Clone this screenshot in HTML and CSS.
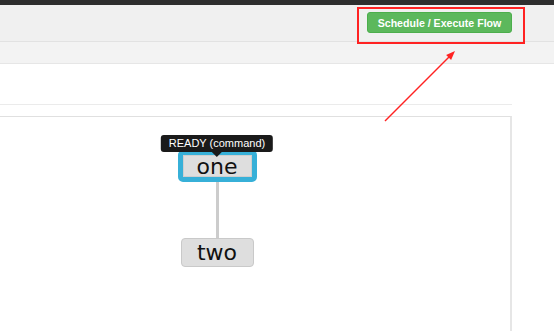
FILE: index.html
```html
<!DOCTYPE html>
<html lang="en">

<head>
    <meta charset="UTF-8">
    <title>Flow</title>
    <link rel="stylesheet" href="styles.css">
</head>

<body>
    <div class="topbar"></div>
    <div class="header">
        <button class="btn-execute">Schedule / Execute Flow</button>
    </div>
    <div class="subbar"></div>

    <div class="content">
        <div class="divider"></div>
        <div class="panel">
            <div class="graph">
                <div class="node node-active">
                    <div class="node-tip">READY (command)</div>
                    <div class="node-label">one</div>
                </div>
                <div class="edge"></div>
                <div class="node node-plain">two</div>
            </div>
        </div>
    </div>

    <!-- annotation drawn over the screenshot -->
    <svg class="annotation" width="554" height="331" viewBox="0 0 554 331">
        <rect x="358" y="8" width="166" height="35" fill="none" stroke="#f22" stroke-width="2" />
        <line x1="385" y1="121" x2="450" y2="56" stroke="#f22" stroke-width="1.5" />
        <polygon points="455,51 451.1,59.9 446.1,54.9" fill="#f22" />
    </svg>
</body>

</html>
```

FILE: styles.css
```css
* {
    margin: 0;
    padding: 0;
    box-sizing: border-box;
}

body {
    font-family: 'Liberation Sans', Arial, sans-serif;
    background: #fff;
    height: 331px;
    overflow: hidden;
    position: relative;
}

.topbar {
    height: 5px;
    background: #2e2e2e;
}

/* Header with the action button */
.header {
    height: 37px;
    background: #f0f0f0;
    border-bottom: 1px solid #e2e2e2;
    display: flex;
    justify-content: flex-end;
    align-items: flex-start;
    padding: 7px 42px 0 0;
}

.btn-execute {
    width: 145px;
    height: 21px;
    background: #5cb85c;
    border: 1px solid #4cae4c;
    border-radius: 3px;
    color: #fff;
    font-family: 'Liberation Sans', Arial, sans-serif;
    font-size: 10.6px;
    font-weight: bold;
}

.subbar {
    height: 22px;
    background: #f3f3f3;
    border-bottom: 1px solid #e6e6e6;
}

.content {
    width: 512px;
}

.divider {
    margin-top: 40px;
    border-top: 1px solid #ebebeb;
}

.panel {
    margin-top: 11px;
    height: 215px;
    border-top: 1px solid #e0e0e0;
    border-right: 2px solid #e6e6e6;
    width: 512px;
}

/* Flow graph */
.graph {
    width: 120px;
    margin-left: 157px;
    padding-top: 33px;
    display: flex;
    flex-direction: column;
    align-items: center;
}

.node {
    position: relative;
    font-family: 'DejaVu Sans', Verdana, sans-serif;
    font-size: 22px;
    color: #111;
    text-align: center;
}

.node-active {
    width: 79px;
    height: 32px;
    border: 5px solid #37b0d8;
    border-radius: 5px;
}

.node-label {
    height: 22px;
    line-height: 21px;
    background: #dedede;
    border: 1px solid #cfcfcf;
}

.node-tip {
    position: absolute;
    bottom: calc(100% + 3px);
    left: 50%;
    transform: translateX(-50%);
    white-space: nowrap;
    background: #1a1a1a;
    color: #fff;
    font-family: 'Liberation Sans', Arial, sans-serif;
    font-size: 11px;
    height: 17px;
    line-height: 17px;
    padding: 0 8px;
    border-radius: 3px;
}

.node-tip:after {
    content: '';
    position: absolute;
    top: 100%;
    left: 50%;
    margin-left: -5px;
    border-left: 5px solid transparent;
    border-right: 5px solid transparent;
    border-top: 5px solid #1a1a1a;
}

.edge {
    width: 3px;
    height: 56px;
    background: #cccccc;
}

.node-plain {
    width: 73px;
    height: 29px;
    line-height: 27px;
    background: #dedede;
    border: 1px solid #c9c9c9;
    border-radius: 4px;
}

.annotation {
    position: absolute;
    top: 0;
    left: 0;
    pointer-events: none;
}
```
